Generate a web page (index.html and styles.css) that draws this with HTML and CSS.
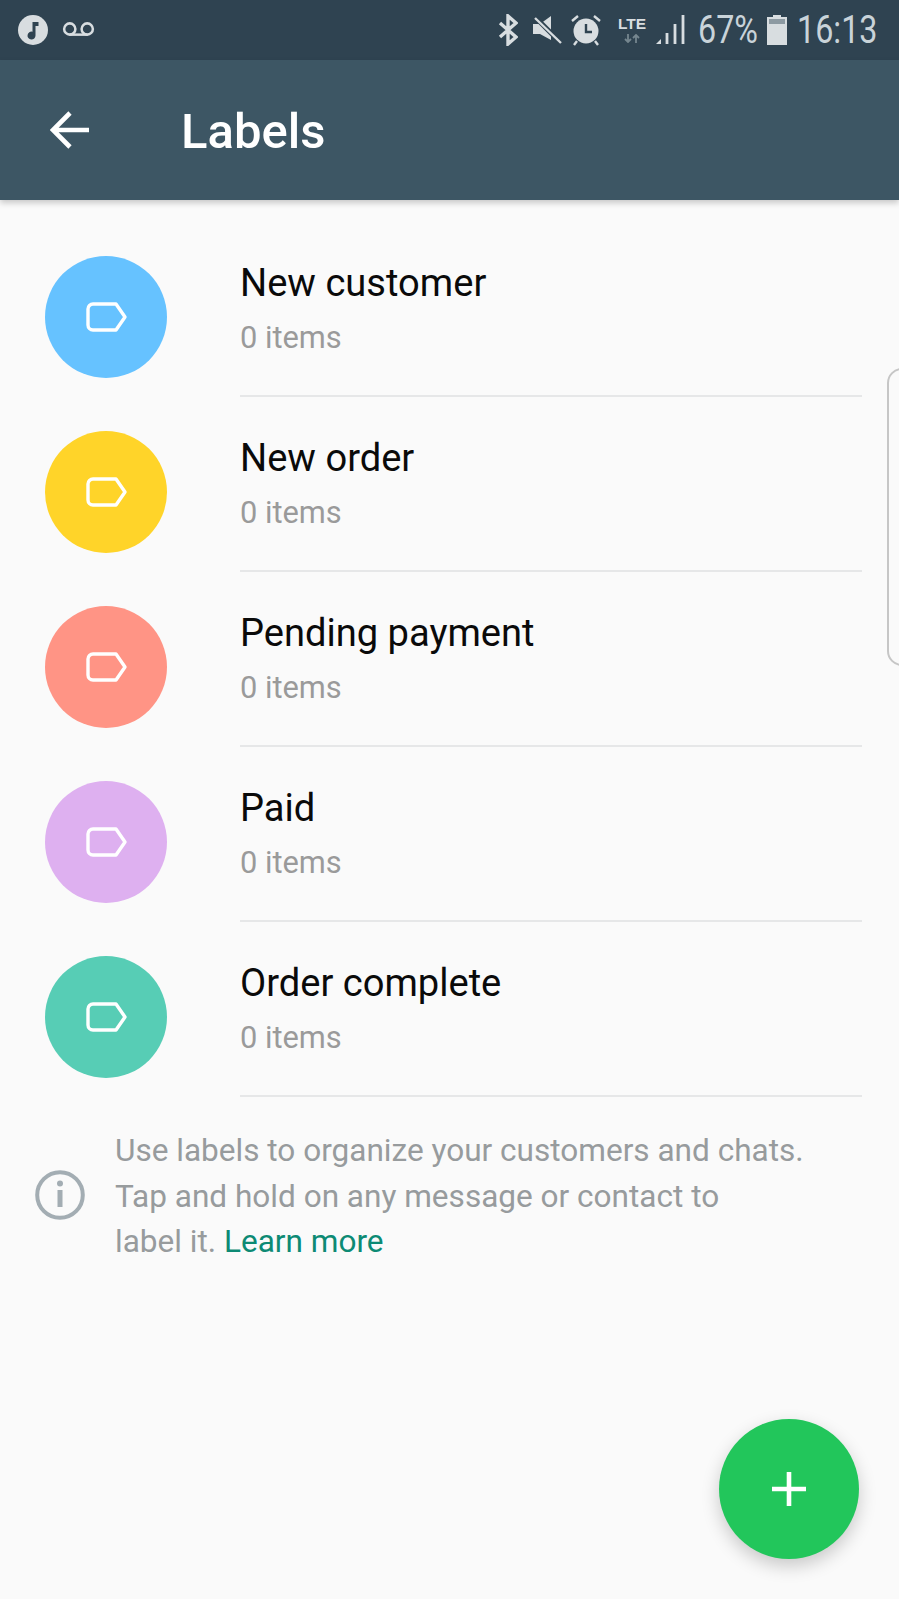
FILE: index.html
```html
<!DOCTYPE html>
<html lang="en">
<head>
<meta charset="utf-8">
<title>Labels</title>
<link rel="stylesheet" href="styles.css">
</head>
<body>
<div class="screen">
  <header class="status">
    <div class="status-left">
      <svg class="ic-music" viewBox="0 0 30 30"><circle cx="15" cy="15" r="15" fill="#d8dde0"/><path d="M14.500 7h6v4h-3v9.500a4 4 0 1 1-3-3.800z" fill="#2f4351"/></svg>
      <svg class="ic-vm" viewBox="0 0 34 16"><circle cx="8" cy="8" r="5.800" fill="none" stroke="#d8dde0" stroke-width="2.600"/><circle cx="26" cy="8" r="5.800" fill="none" stroke="#d8dde0" stroke-width="2.600"/><path d="M8 13.800h18" stroke="#d8dde0" stroke-width="2.600"/></svg>
    </div>
    <div class="status-right">
      <svg class="ic-bt" viewBox="0 0 20 32"><path d="M2 9l16 14-8 7V2l8 7L2 23" fill="none" stroke="#d8dde0" stroke-width="3.400"/></svg>
      <svg class="ic-mute" viewBox="0 0 30 28"><path d="M1 8h7l11-8v24L8 18H1z" fill="#d8dde0"/><path d="M3 1l26 26" stroke="#2f4351" stroke-width="5"/><path d="M3 2l26 25" stroke="#d8dde0" stroke-width="2.400"/></svg>
      <svg class="ic-alarm" viewBox="0 0 30 32"><circle cx="15" cy="17" r="12.500" fill="#d8dde0"/><path d="M15 10v8h6" fill="none" stroke="#2f4351" stroke-width="2.400"/><path d="M1 7l6-5M29 7l-6-5M6 27l-3 4M24 27l3 4" stroke="#d8dde0" stroke-width="2.400"/></svg>
      <div class="lte"><span class="lte-text">LTE</span>
        <svg class="ic-arrows" viewBox="0 0 20 9"><path d="M6 0v8M3 5l3 3 3-3M14 9V1M11 4l3-3 3 3" fill="none" stroke="#75868f" stroke-width="1.800"/></svg>
      </div>
      <svg class="ic-signal" viewBox="0 0 30 30"><path d="M0 29l5-5v5z" fill="#d8dde0"/><path d="M11 18v11M19 9v20M27 0v29" stroke="#d8dde0" stroke-width="2.800"/></svg>
      <span class="st-text pct">67%</span>
      <svg class="ic-batt" viewBox="0 0 20 30"><path d="M6 0h8v2h6v28H0V2h6z" fill="#d8dde0"/><rect x="2" y="4" width="16" height="5" fill="#8d9aa2"/></svg>
      <span class="st-text clock">16:13</span>
    </div>
  </header>

  <div class="toolbar">
    <svg class="ic-back" viewBox="0 0 40 40"><path d="M39 20H3M20 3L3 20l17 17" fill="none" stroke="#fff" stroke-width="4.600"/></svg>
    <h1 class="title">Labels</h1>
  </div>

  <ul class="list">
    <li class="row">
      <div class="avatar blue"><svg class="ic-tag" viewBox="0 0 42 30"><path d="M7 2h23l9 13-9 13H7a5 5 0 0 1-5-5V7a5 5 0 0 1 5-5z" fill="none" stroke="#fff" stroke-width="3.400" stroke-linejoin="round"/></svg></div>
      <div class="row-text"><div class="name">New customer</div><div class="count">0 items</div></div>
    </li>
    <li class="row">
      <div class="avatar yellow"><svg class="ic-tag" viewBox="0 0 42 30"><path d="M7 2h23l9 13-9 13H7a5 5 0 0 1-5-5V7a5 5 0 0 1 5-5z" fill="none" stroke="#fff" stroke-width="3.400" stroke-linejoin="round"/></svg></div>
      <div class="row-text"><div class="name">New order</div><div class="count">0 items</div></div>
    </li>
    <li class="row">
      <div class="avatar salmon"><svg class="ic-tag" viewBox="0 0 42 30"><path d="M7 2h23l9 13-9 13H7a5 5 0 0 1-5-5V7a5 5 0 0 1 5-5z" fill="none" stroke="#fff" stroke-width="3.400" stroke-linejoin="round"/></svg></div>
      <div class="row-text"><div class="name">Pending payment</div><div class="count">0 items</div></div>
    </li>
    <li class="row">
      <div class="avatar purple"><svg class="ic-tag" viewBox="0 0 42 30"><path d="M7 2h23l9 13-9 13H7a5 5 0 0 1-5-5V7a5 5 0 0 1 5-5z" fill="none" stroke="#fff" stroke-width="3.400" stroke-linejoin="round"/></svg></div>
      <div class="row-text"><div class="name">Paid</div><div class="count">0 items</div></div>
    </li>
    <li class="row">
      <div class="avatar teal"><svg class="ic-tag" viewBox="0 0 42 30"><path d="M7 2h23l9 13-9 13H7a5 5 0 0 1-5-5V7a5 5 0 0 1 5-5z" fill="none" stroke="#fff" stroke-width="3.400" stroke-linejoin="round"/></svg></div>
      <div class="row-text"><div class="name">Order complete</div><div class="count">0 items</div></div>
    </li>
  </ul>

  <div class="info">
    <svg class="ic-info" viewBox="0 0 50 50"><circle cx="25" cy="25" r="22.800" fill="none" stroke="#a3adb3" stroke-width="4"/><path d="M25 20v17" stroke="#a3adb3" stroke-width="5"/><circle cx="25" cy="13.500" r="3" fill="#a3adb3"/></svg>
    <p class="info-text">Use labels to organize your customers and chats.<br>Tap and hold on any message or contact to<br>label it. <a class="link">Learn more</a></p>
  </div>

  <div class="edge-handle"></div>
  <button class="fab"><svg class="ic-plus" viewBox="0 0 34 34"><path d="M17 0v34M0 17h34" stroke="#fff" stroke-width="4.600"/></svg></button>
</div>
</body>
</html>
```

FILE: styles.css
```css
* { box-sizing: border-box; }
html, body { margin: 0; padding: 0; }
body { font-family: Roboto, "Liberation Sans", sans-serif; background: #fafafa; }
.screen { position: relative; width: 899px; height: 1599px; overflow: hidden; background: #fafafa; }

.status { height: 60px; background: #2f4351; display: flex; justify-content: space-between; align-items: center; padding: 0 22px 0 18px; }
.status-left { display: flex; align-items: center; gap: 14px; }
.status-right { display: flex; align-items: center; }
.ic-music { width: 30px; height: 30px; }
.ic-vm { width: 33px; height: 16px; margin-top: -2px; }
.ic-bt { width: 20px; height: 32px; }
.ic-mute { width: 30px; height: 28px; margin-left: 14px; }
.ic-alarm { width: 30px; height: 32px; margin-left: 9px; }
.lte { display: flex; flex-direction: column; align-items: center; width: 32px; margin-left: 15px; margin-top: -2px; }
.lte-text { color: #d8dde0; font: 700 15.500px/16px "Liberation Sans", sans-serif; }
.ic-arrows { width: 20px; height: 9px; display: block; margin-top: 2px; }
.ic-signal { width: 30px; height: 30px; margin-left: 8px; }
.st-text { display: block; flex: none; color: #c9d3d9; font: 400 38px/44px Roboto, sans-serif; white-space: nowrap; transform: scaleX(.85); transform-origin: left center; }
.pct { width: 58px; margin-left: 12px; }
.ic-batt { width: 20px; height: 30px; margin-left: 11px; }
.clock { width: 80px; margin-left: 10px; }

.toolbar { position: relative; height: 140px; background: #3d5664; display: flex; align-items: center; padding-left: 50px; box-shadow: 0 3px 6px rgba(0,0,0,.2); z-index: 1; }
.ic-back { width: 40px; height: 40px; }
.title { margin: 3px 0 0 91px; color: #fff; font: 500 49px/56px Roboto, sans-serif; }

.list { list-style: none; margin: 21px 0 0; padding: 0; }
.row { display: flex; height: 175px; padding-left: 45px; }
.avatar { flex: none; width: 122px; height: 122px; margin-top: 35px; border-radius: 50%; display: flex; align-items: center; justify-content: center; }
.blue { background: #66c2ff; }
.yellow { background: #ffd429; }
.salmon { background: #ff9485; }
.purple { background: #deb0f0; }
.teal { background: #57cdb5; }
.ic-tag { width: 42px; height: 30px; margin-left: 2px; }
.row-text { flex: 1; margin: 0 37px -1px 73px; border-bottom: 2px solid #e6e7e8; padding-top: 38px; }
.name { color: #0a0a0a; font-size: 38.100px; line-height: 48px; }
.count { color: #9a9a9a; font-size: 30.800px; line-height: 40px; margin-top: 11px; }

.info { display: flex; align-items: center; padding: 32px 0 0 35px; }
.ic-info { width: 50px; height: 50px; flex: none; margin-top: -2px; }
.info-text { margin: 0 0 0 30px; color: #979b9d; font-size: 31.550px; line-height: 45.500px; }
.link { color: #0d8a74; }

.edge-handle { position: absolute; left: 887px; top: 368px; width: 30px; height: 298px; border: 2px solid #c6c6c6; border-radius: 16px; }
.fab { position: absolute; right: 40px; bottom: 40px; width: 140px; height: 140px; border: 0; padding: 0; border-radius: 50%; background: #22c65b; display: flex; align-items: center; justify-content: center; box-shadow: 0 7px 18px rgba(0,0,0,.2); }
.ic-plus { width: 34px; height: 34px; }
```
